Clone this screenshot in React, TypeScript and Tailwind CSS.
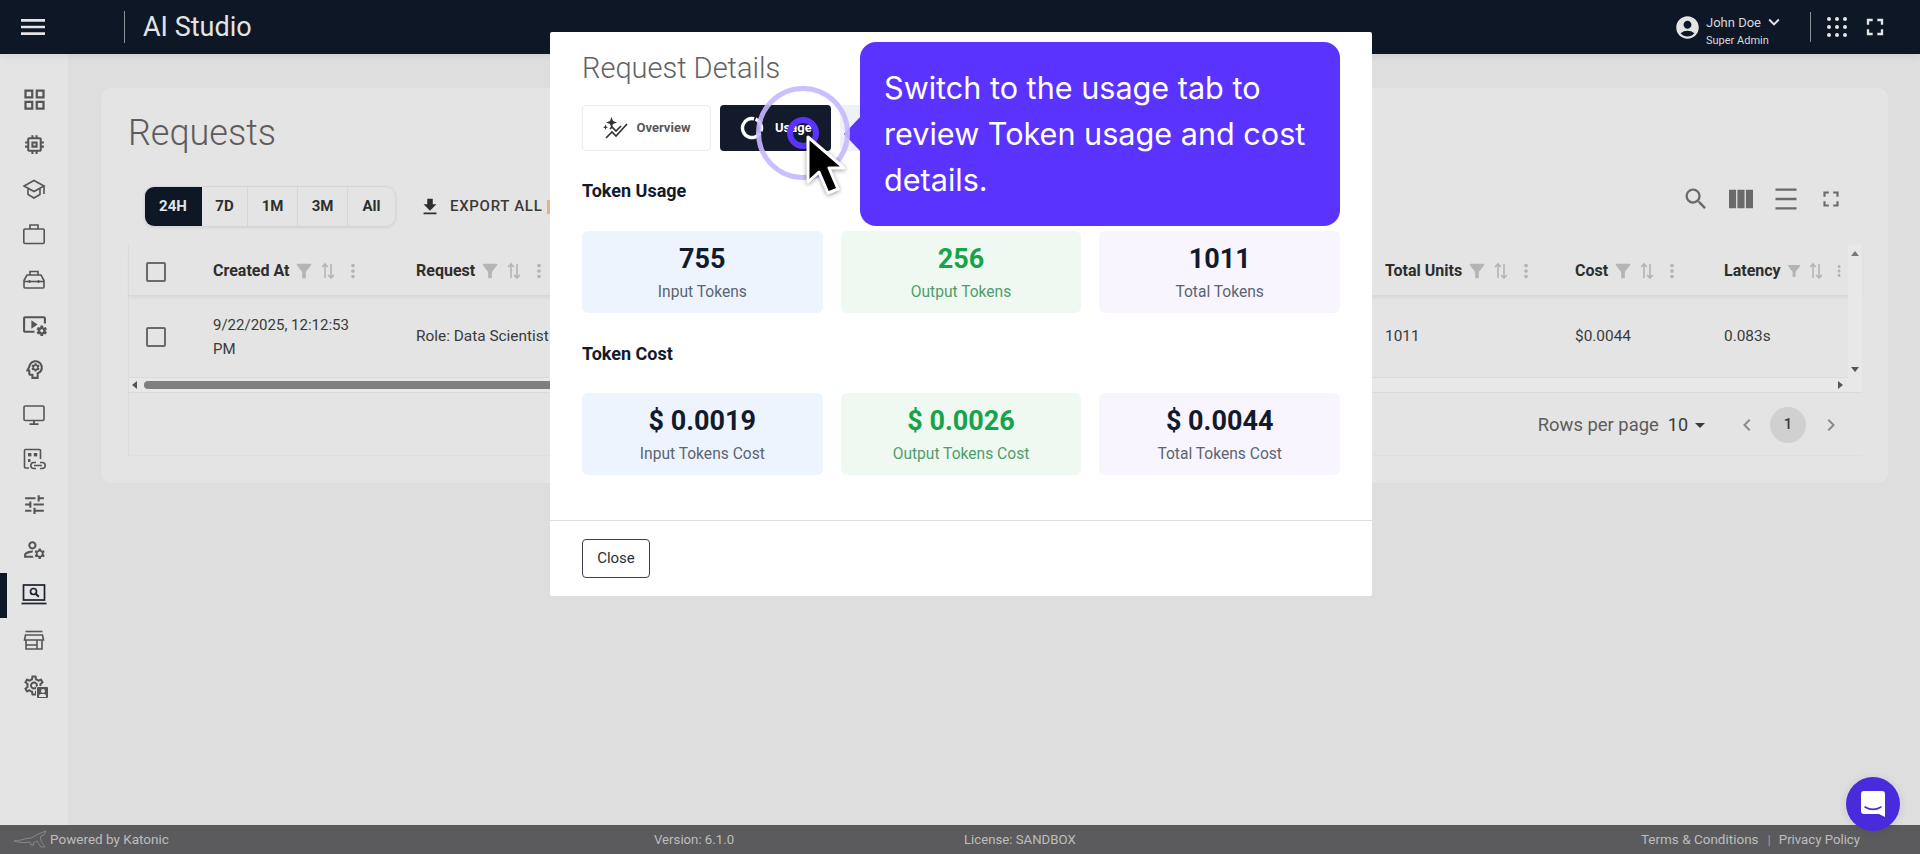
import React from "react";
import {
  MdOutlineGridView, MdOutlineMemory, MdOutlineVideoSettings, MdOutlinePsychology, MdOutlineTune, MdOutlineManageAccounts,
  MdOutlineSettings, MdAccountCircle, MdKeyboardArrowDown, MdFullscreen, MdViewColumn,
  MdDensityMedium, MdSearch, MdMoreVert, MdFilterAlt, MdFileDownload, MdChevronLeft, MdChevronRight, MdArrowDropDown, MdMenu,
} from "react-icons/md";

const Svg = ({ children, w = 24 }: { children: React.ReactNode; w?: number }) => (
  <svg width={w} height="24" viewBox={`0 0 ${w} 24`} fill="none" stroke="currentColor" strokeWidth="1.6">{children}</svg>
);
const School = () => (
  <Svg><path d="M12 3.5L2 9l10 5.5L22 9z" /><path d="M6 12v5.5l6 3.5 6-3.5V12" /><path d="M22 9v8" /></Svg>
);
const Briefcase = () => (
  <Svg><rect x="1.8" y="7" width="20.4" height="14.5" rx="1.2" /><path d="M8 7V3h8v4" /></Svg>
);
const Toolbox = () => (
  <Svg>
    <path d="M2 13.5L5 8h14l3 5.5V20a1 1 0 0 1-1 1H3a1 1 0 0 1-1-1z" />
    <path d="M8 8V4.5h8V8" />
    <path d="M2 14.5h20" />
    <path d="M7.5 13v3M16.5 13v3" />
  </Svg>
);
const Monitor = () => (
  <Svg><rect x="2" y="3" width="20" height="14.5" rx="1.2" /><path d="M12 17.5V21M7.5 21.2h9" strokeWidth="1.8" /></Svg>
);
const Store = () => (
  <Svg>
    <path d="M3.5 3.5h17" />
    <path d="M3.5 7h17l1 5h-19z" />
    <path d="M4 12v9h16v-9M4 17h11M15 12v9" />
  </Svg>
);
const LinkedApps = () => (
  <svg width="24" height="24" viewBox="0 0 24 24" fill="none" stroke="currentColor" strokeWidth="1.6">
    <path d="M7 20H3.5a1 1 0 0 1-1-1V2.5a1 1 0 0 1 1-1h14a1 1 0 0 1 1 1V11" />
    <rect x="6" y="5" width="3.4" height="3.4" fill="currentColor" stroke="none" />
    <rect x="11.8" y="5" width="3.4" height="3.4" fill="currentColor" stroke="none" />
    <rect x="6" y="11" width="2.4" height="3" fill="currentColor" stroke="none" />
    <path d="M14 14.5h-2.2a3 3 0 0 0 0 6H14M18 14.5h2.2a3 3 0 0 1 0 6H18M12 17.5h8" />
  </svg>
);
const LaptopSearch = () => (
  <svg width="26" height="24" viewBox="0 0 26 24" fill="none" stroke="currentColor" strokeWidth="1.7">
    <rect x="2.5" y="2" width="21" height="15" />
    <path d="M0.5 20.5h25" />
    <circle cx="12.5" cy="8.5" r="3" />
    <path d="M14.8 10.8l3 3" strokeWidth="2" />
  </svg>
);
const GearUser = () => (
  <span className="relative flex h-6 w-6">
    <MdOutlineSettings size={25} />
    <span className="absolute right-[-3px] bottom-[-2px] flex h-[13px] w-[13px] flex-col items-center justify-end rounded-[2px] border border-[#e4e4e4] bg-[#555555]">
      <span className="h-[4px] w-[4px] rounded-full bg-[#e4e4e4]" />
      <span className="mb-[1px] mt-[1px] h-[3px] w-[7px] rounded-t-[2px] bg-[#e4e4e4]" />
    </span>
  </span>
);

const navItems: { icon: React.ReactNode; active?: boolean }[] = [
  { icon: <MdOutlineGridView size={27} /> },
  { icon: <MdOutlineMemory size={25} /> },
  { icon: <School /> },
  { icon: <Briefcase /> },
  { icon: <Toolbox /> },
  { icon: <MdOutlineVideoSettings size={25} /> },
  { icon: <MdOutlinePsychology size={25} /> },
  { icon: <Monitor /> },
  { icon: <LinkedApps /> },
  { icon: <MdOutlineTune size={25} /> },
  { icon: <MdOutlineManageAccounts size={25} /> },
  { icon: <LaptopSearch />, active: true },
  { icon: <Store /> },
  { icon: <GearUser /> },
];

const SortIcon = () => (
  <svg width="14" height="18" viewBox="0 0 14 18" fill="none" stroke="#b4b4b4" strokeWidth="1.6">
    <path d="M4 16V2M1.2 5L4 2l2.8 3M10 2v14M7.2 13l2.8 3 2.8-3" />
  </svg>
);

const ColHead = ({ label, wClass }: { label: string; wClass: string }) => (
  <div className={`flex items-center pt-[1px] ${wClass}`}>
    <span className="text-[16px] font-bold text-[#2e2e2e]">{label}</span>
    <MdFilterAlt size={22} className="ml-[4px] text-[#b4b4b4]" />
    <span className="ml-[6px]"><SortIcon /></span>
    <MdMoreVert size={22} className="ml-[7px] text-[#b4b4b4]" />
  </div>
);

const Checkbox = () => <div className="h-[20px] w-[20px] rounded-[2px] border-2 border-[#6a6a6a]" />;

const Stat = ({ value, label, bg, valueC, labelC }: { value: string; label: string; bg: string; valueC: string; labelC: string }) => (
  <div className={`flex h-[82px] flex-col items-center rounded-[6px] pt-[10px] ${bg}`}>
    <div className={`text-[27px] font-bold leading-[36px] ${valueC}`}>{value}</div>
    <div className={`mt-[5px] text-[15.6px] leading-[20px] ${labelC}`}>{label}</div>
  </div>
);

export default function App() {
  return (
    <div className="relative flex h-[854px] w-[1920px] flex-col overflow-hidden bg-[#dedede] font-['Roboto',sans-serif]">
      {/* Header */}
      <header className="z-10 flex h-[54px] shrink-0 items-center bg-[#0e1726] shadow-[0_2px_8px_rgba(0,0,0,0.08)]">
        <MdMenu size={32} className="ml-[17px] text-[#e4e4e4]" />
        <div className="ml-[75px] h-[32px] w-px bg-[#8a8f98]" />
        <div className="ml-[18px] text-[27px] leading-none text-[#e4e4e4]">AI Studio</div>
        <div className="ml-auto flex items-center text-[#d8d8d8]">
          <MdAccountCircle size={27} className="text-[#e4e4e4]" />
          <div className="ml-[5px] flex flex-col pt-[7px]">
            <div className="flex items-center text-[13px] leading-[15px]">John Doe<MdKeyboardArrowDown size={22} className="-my-[4px] ml-[2px] text-[#e4e4e4]" /></div>
            <div className="mt-[4px] text-[11px] leading-[13px]">Super Admin</div>
          </div>
          <div className="ml-[25px] h-[30px] w-px bg-[#8a8f98]" />
          <div className="ml-[16px] grid grid-cols-3 gap-[4px]">
            {Array.from({ length: 9 }).map((_, i) => (
              <span key={i} className="h-[4px] w-[4px] rounded-full bg-[#e4e4e4]" />
            ))}
          </div>
          <MdFullscreen size={28} className="ml-[14px] mr-[31px] text-[#e4e4e4]" />
        </div>
      </header>

      <div className="flex min-h-0 flex-1">
        {/* Sidebar */}
        <aside className="flex w-[68px] shrink-0 flex-col bg-[#e4e4e4] pt-[22.5px] text-[#555555]">
          {navItems.map((n, i) => (
            <div key={i} className={`relative flex h-[45.1px] items-center justify-center ${n.active ? "text-[#1d2230]" : ""}`}>
              {n.active && <span className="absolute left-0 top-0 h-full w-[7px] bg-[#0e1726]" />}
              {n.icon}
            </div>
          ))}
        </aside>

        {/* Main */}
        <main className="flex-1 pl-[33px] pr-[32px] pt-[34px]">
          <section className="h-[395px] rounded-[10px] bg-[#e4e4e4] pl-[27px] pr-[26px]">
            <h1 className="pt-[24px] text-[36px] font-light leading-[42px] text-[#5c5c5c]">Requests</h1>
            <div className="mt-[32px] flex items-center pl-[16px] pr-[10px]">
              <div className="flex h-[41px] overflow-hidden rounded-[10px] border border-[#d5d5da] text-[15px] font-bold text-[#2e2e2e] shadow-[0_1px_3px_rgba(0,0,0,0.08)]">
                <div className="-my-px -ml-px flex w-[58px] items-center justify-center bg-[#0e1726] text-[#e4e4e4]">24H</div>
                <div className="flex w-[46px] items-center justify-center border-r border-[#d5d5da]">7D</div>
                <div className="flex w-[50px] items-center justify-center border-r border-[#d5d5da]">1M</div>
                <div className="flex w-[50px] items-center justify-center border-r border-[#d5d5da]">3M</div>
                <div className="flex w-[47px] items-center justify-center">All</div>
              </div>
              <MdFileDownload size={22} className="ml-[23px] text-[#2e2e2e]" />
              <span className="ml-[9px] text-[15px] font-medium tracking-[0.7px] text-[#3a3a3a]">EXPORT ALL</span>
              <span className="ml-[5px] h-[14px] w-[3px] bg-[#e0b48a]" />
              <div className="ml-auto flex -translate-y-[8px] items-center text-[#6a6a6a]">
                <MdSearch size={28} />
                <MdViewColumn size={32} className="ml-[15px]" />
                <MdDensityMedium size={28} className="ml-[15px]" />
                <MdFullscreen size={26} className="ml-[18px] mr-[8px]" />
              </div>
            </div>

            {/* Table */}
            <div className="relative mt-[18px] border-l border-[#dcdcdc]">
              <div className="flex h-[51px] items-center border-b border-[#d9d9d9] pr-[14px] shadow-[0_2px_3px_rgba(0,0,0,0.05)]">
                <div className="flex w-[84px] pl-[17px] pt-[4px]"><Checkbox /></div>
                <ColHead label="Created At" wClass="w-[203px]" />
                <div className="min-w-0 flex-1"><ColHead label="Request" wClass="" /></div>
                <ColHead label="Total Units" wClass="w-[190px]" />
                <ColHead label="Cost" wClass="w-[149px]" />
                <ColHead label="Latency" wClass="w-[124px] overflow-hidden" />
              </div>
              <div className="flex h-[82px] items-center border-b border-[#dadada] pr-[14px] text-[15.4px] text-[#3a3a3a]">
                <div className="flex w-[84px] pl-[17px]"><Checkbox /></div>
                <div className="w-[203px] pr-[50px] text-[15px] leading-[24px]">9/22/2025, 12:12:53 PM</div>
                <div className="min-w-0 flex-1">Role: Data Scientist</div>
                <div className="w-[190px]">1011</div>
                <div className="w-[149px]">$0.0044</div>
                <div className="w-[124px]">0.083s</div>
              </div>
              {/* Scrollbars */}
              <div className="flex h-[15px] items-center border-b border-[#dadada] bg-[#e8e8e8] pr-[14px]">
                <span className="ml-[3px] h-0 w-0 border-y-[4px] border-r-[5px] border-y-transparent border-r-[#555]" />
                <div className="ml-[7px] h-[8px] w-[480px] rounded-full bg-[#7f7f7f]" />
                <span className="ml-auto mr-[5px] h-0 w-0 border-y-[4px] border-l-[5px] border-y-transparent border-l-[#555]" />
              </div>
              <div className="absolute right-0 top-0 flex h-[133px] w-[14px] flex-col items-center justify-between bg-[#e8e8e8] py-[6px]">
                <span className="h-0 w-0 border-x-[4px] border-b-[5px] border-x-transparent border-b-[#777]" />
                <span className="h-0 w-0 border-x-[4px] border-t-[5px] border-x-transparent border-t-[#555]" />
              </div>
              {/* Pagination */}
              <div className="flex h-[63px] items-center justify-end border-b border-[#dfdfdf] pr-[19px] pt-[1px] text-[#5c5c5c]">
                <span className="text-[18.4px]">Rows per page</span>
                <span className="ml-[9px] text-[18px] text-[#3a3a3a]">10</span>
                <MdArrowDropDown size={24} className="text-[#3a3a3a]" />
                <MdChevronLeft size={24} className="ml-[23px] text-[#8a8a8a]" />
                <span className="ml-[11px] flex h-[36px] w-[36px] items-center justify-center rounded-full bg-[#d0d0d0] text-[15px] font-medium text-[#3a3a3a]">1</span>
                <MdChevronRight size={24} className="ml-[13px] text-[#8a8a8a]" />
              </div>
            </div>
          </section>
        </main>
      </div>

      {/* Footer */}
      <footer className="flex h-[29px] shrink-0 items-center bg-[#5b5b5d] text-[13.2px] text-[#bdbdbd]">
        <svg width="36" height="20" viewBox="0 0 36 20" fill="none" stroke="#8d8d8d" strokeWidth="0.9" className="ml-[14px]">
          <path d="M0 11c7 0 11-3 17-3 3-1 6-4 10-5l5-2-2 4-3 1c-1 3 0 6 2 8l2 3h-4l-4-6-4 2 1 2h-3l-1-3c-5 1-10 1-16-1z" />
        </svg>
        <span className="w-[604px] text-[13.5px]">Powered by Katonic</span>
        <span className="w-[310px]">Version: 6.1.0</span>
        <span>License: SANDBOX</span>
        <span className="ml-auto text-[13.5px]">Terms &amp; Conditions</span>
        <span className="ml-[9px] mr-[8px] text-[#c48aa5]">|</span>
        <span className="mr-[60px]">Privacy Policy</span>
      </footer>

      {/* Modal */}
      <div className="absolute left-[550px] top-[32px] z-20 flex h-[564px] w-[822px] flex-col rounded-[2px] bg-white">
        <div className="px-[32px]">
          <h2 className="pt-[17px] text-[29px] font-light leading-[38px] text-[#626262]">Request Details</h2>
          <div className="mt-[18px] flex gap-[9px]">
            <div className="flex h-[46px] w-[129px] items-center justify-center rounded-[4px] border border-[#ececec] text-[13px] font-bold text-[#595959]">
              <svg width="26" height="22" viewBox="0 0 26 22" fill="none" stroke="#333" strokeWidth="1.7" className="mr-[8px]">
                <path d="M3 21l6-6 4 4 11-12" />
                <path d="M7 12l2-2 4 4 5-5" />
                <path d="M8.500 0l1.500 4 4 1.500-4 1.500-1.500 4L7 7 3 5.500 7 4zM2.500 7.500l.7 2 1.800.7-1.800.7-.7 2-.7-2-1.800-.7 1.800-.7z" fill="#333" stroke="none" />
              </svg>
              Overview
            </div>
            <div className="flex h-[46px] w-[111px] items-center rounded-[4px] bg-[#131a2b] pl-[20px] text-[13px] font-bold text-white">
              <svg width="24" height="24" viewBox="0 0 24 24" fill="none" stroke="white" strokeWidth="3.4" className="mr-[11px]">
                <circle cx="12" cy="12" r="9.5" strokeDasharray="14.500 2 41.200 2" transform="rotate(-68 12 12)" />
              </svg>
              Usage
            </div>
            <div className="h-[46px] w-[100px] rounded-[4px] bg-[#eef2f8]" />
          </div>
          <h3 className="mt-[28px] text-[18px] font-bold leading-[24px] text-[#131a2b]">Token Usage</h3>
          <div className="mt-[28px] grid grid-cols-3 gap-[18px]">
            <Stat value="755" label="Input Tokens" bg="bg-[#edf4fe]" valueC="text-[#131a2b]" labelC="text-[#5a6472]" />
            <Stat value="256" label="Output Tokens" bg="bg-[#eff9f2]" valueC="text-[#16a34a]" labelC="text-[#4f9e6a]" />
            <Stat value="1011" label="Total Tokens" bg="bg-[#f8f5ff]" valueC="text-[#131a2b]" labelC="text-[#5a6472]" />
          </div>
          <h3 className="mt-[29px] text-[18px] font-bold leading-[24px] text-[#131a2b]">Token Cost</h3>
          <div className="mt-[27px] grid grid-cols-3 gap-[18px]">
            <Stat value="$ 0.0019" label="Input Tokens Cost" bg="bg-[#edf4fe]" valueC="text-[#131a2b]" labelC="text-[#5a6472]" />
            <Stat value="$ 0.0026" label="Output Tokens Cost" bg="bg-[#eff9f2]" valueC="text-[#16a34a]" labelC="text-[#4f9e6a]" />
            <Stat value="$ 0.0044" label="Total Tokens Cost" bg="bg-[#f8f5ff]" valueC="text-[#131a2b]" labelC="text-[#5a6472]" />
          </div>
        </div>
        <div className="mt-[45px] flex-1 border-t border-[#dedede] px-[32px] pt-[18px]">
          <div className="flex h-[39px] w-[68px] items-center justify-center rounded-[4px] border border-[#3a3f4c] text-[15px] text-[#2a2f3a]">Close</div>
        </div>
      </div>

      {/* Tour tooltip */}
      <div className="absolute left-[860px] top-[42px] z-30 h-[184px] w-[480px] rounded-[16px] bg-[#5b33ff] pl-[24px] pr-[20px] pt-[23px] font-['Inter',sans-serif] text-[30.6px] leading-[46px] text-white">
        <span className="absolute left-[-16px] top-[74px] h-0 w-0 border-y-[18px] border-r-[17px] border-y-transparent border-r-[#5b33ff]" />
        Switch to the usage tab to review Token usage and cost details.
      </div>

      {/* Pulse + cursor */}
      <div className="absolute left-[756px] top-[86px] z-30 h-[94px] w-[94px] rounded-full border-[5px] border-[#c7b8ff]/90" />
      <div className="absolute left-[787px] top-[117px] z-30 h-[32px] w-[32px] rounded-full border-[6px] border-[#5b33ff]" />
      <svg width="44" height="64" viewBox="0 0 44 64" className="absolute left-[805px] top-[135px] z-30 drop-shadow-[0_1px_2px_rgba(0,0,0,0.4)]">
        <path d="M3 2L3 47L14 37L23 58L33 54L24 33L39 33Z" fill="#000" stroke="#fff" strokeWidth="3" strokeLinejoin="round" />
      </svg>

      {/* Chat launcher */}
      <div className="absolute left-[1846px] top-[777px] z-30 flex h-[54px] w-[54px] items-center justify-center rounded-full bg-[#4a2bdb] shadow-[0_1px_10px_rgba(0,0,0,0.1)]">
        <svg width="26" height="28" viewBox="0 0 26 28" fill="white">
          <path d="M4 1h18a3 3 0 0 1 3 3v23l-6-3H4a3 3 0 0 1-3-3V4a3 3 0 0 1 3-3z" />
          <path d="M5 17c5 3 11 3 16 0" stroke="#4a2bdb" strokeWidth="1.6" fill="none" strokeLinecap="round" />
        </svg>
      </div>
    </div>
  );
}
